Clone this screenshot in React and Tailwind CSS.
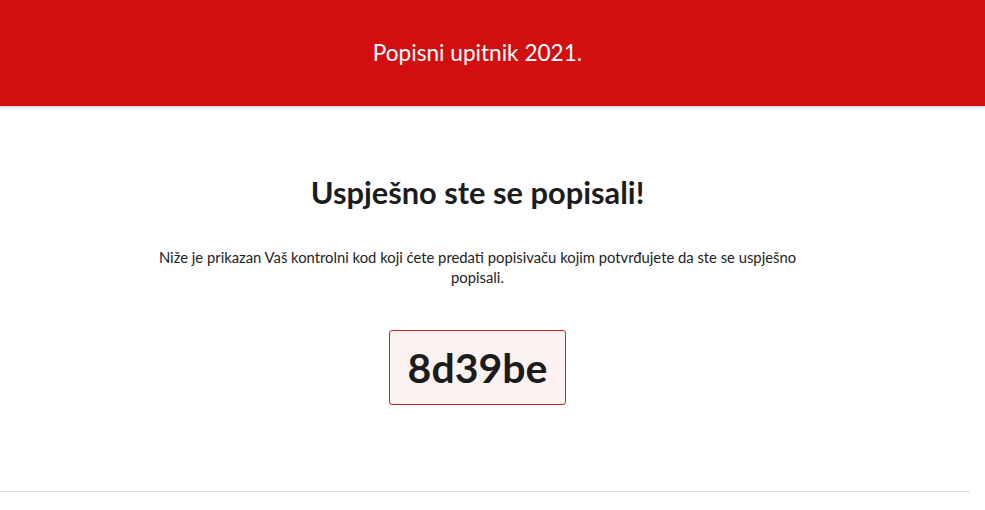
export default function App() {
  return (
    <div className="min-h-[510px] bg-white" style={{ fontFamily: 'Lato, "Noto Sans", sans-serif' }}>
      <header className="h-[106px] bg-[#d20e10] shadow-[0_1px_2px_rgba(0,0,0,0.25)]">
        <div className="w-[955px] h-full flex items-center justify-center">
          <h1 className="text-white text-[22.6px] leading-none">Popisni upitnik 2021.</h1>
        </div>
      </header>
      <div className="w-[970px]">
        <main className="w-[955px] flex flex-col items-center pt-[69px] pb-[86px]">
          <h2 className="text-[#1c1c1c] text-[30.8px] font-bold leading-[36px]">Uspješno ste se popisali!</h2>
          <p className="mt-[36px] w-[660px] text-center text-[14.8px] leading-[20px] text-[#222]">
            Niže je prikazan Vaš kontrolni kod koji ćete predati popisivaču kojim potvrđujete da ste se uspješno popisali.
          </p>
          <div className="mt-[43px] w-[177px] h-[75px] flex items-center justify-center border border-[#c8232b] bg-[#fdf2f2] rounded-[3px]">
            <span className="text-[41px] font-bold text-[#1c1c1c] leading-none">8d39be</span>
          </div>
        </main>
        <div className="border-t border-[#e0e0e0]"></div>
      </div>
    </div>
  );
}
